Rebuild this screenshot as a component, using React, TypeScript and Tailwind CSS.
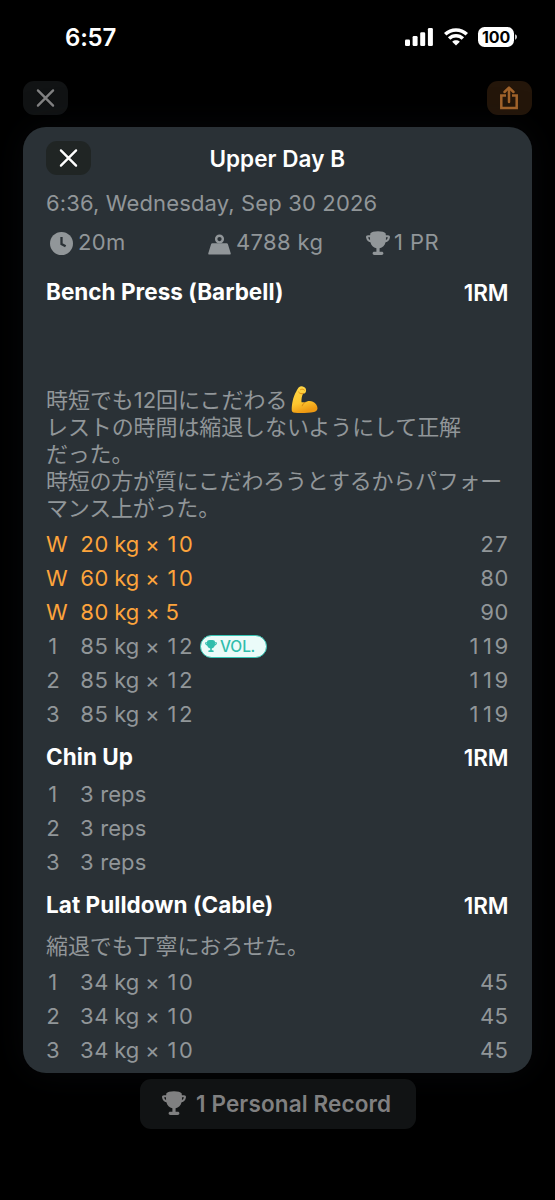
import type { ReactNode } from "react";

type SetRow = { tag: string; text: string; rm?: string; pr?: boolean };

const bench: SetRow[] = [
  { tag: "W", text: "20 kg × 10", rm: "27" },
  { tag: "W", text: "60 kg × 10", rm: "80" },
  { tag: "W", text: "80 kg × 5", rm: "90" },
  { tag: "1", text: "85 kg × 12", rm: "119", pr: true },
  { tag: "2", text: "85 kg × 12", rm: "119" },
  { tag: "3", text: "85 kg × 12", rm: "119" },
];
const chin: SetRow[] = [
  { tag: "1", text: "3 reps" },
  { tag: "2", text: "3 reps" },
  { tag: "3", text: "3 reps" },
];
const lat: SetRow[] = [
  { tag: "1", text: "34 kg × 10", rm: "45" },
  { tag: "2", text: "34 kg × 10", rm: "45" },
  { tag: "3", text: "34 kg × 10", rm: "45" },
];

function Trophy({ className }: { className: string }) {
  return (
    <svg viewBox="0 0 24 24" className={className} fill="currentColor">
      <path d="M4.400 2.200C5.500 1 8 .2 12 .2s6.500.8 7.600 2c.5 3 .6 6.500 0 9-.8 3.300-3 5.200-6 6v3.500h2c1.200 0 1.800.5 1.800 1.600S16.800 24 15.600 24H8.400C7.200 24 6.600 23.400 6.600 22.300s.6-1.600 1.800-1.600h2v-3.500c-3-.8-5.200-2.700-6-6-.6-2.500-.5-6 0-9Z" />
      <path d="M5 5.300H2c-.7 0-1 .3-.9 1C1.500 8.700 3 10.100 5.400 10.300M19 5.300h3c.7 0 1 .3.9 1-.4 2.400-1.900 3.800-4.300 4" fill="none" stroke="currentColor" strokeWidth="2.100" />
    </svg>
  );
}

function Cross({ className }: { className: string }) {
  return (
    <svg viewBox="0 0 18 18" className={className} fill="none" stroke="currentColor" strokeWidth="2.400" strokeLinecap="round">
      <path d="M1.400 1.400 16.600 16.600M16.600 1.400 1.400 16.600" />
    </svg>
  );
}

function Biceps() {
  return (
    <svg viewBox="0 0 28 30" className="ml-1 h-[30px] w-7 shrink-0 -translate-y-px">
      <defs>
        <linearGradient id="skin" x1="0" y1="0" x2="0.3" y2="1">
          <stop offset="0" stopColor="#ffd84a" />
          <stop offset="0.65" stopColor="#fdc62f" />
          <stop offset="1" stopColor="#ee9a13" />
        </linearGradient>
      </defs>
      <path
        d="M8.300 1.900C9.700.9 11.800 1.300 13.400 2.300c1.600 1 2 2.700 1.500 4.400-.4 1.400-1.500 2-2.800 1.900-1.300 2.700-1.800 5.600-1.600 8.700.9 0 2.100.1 3.200.3 2.300-1.900 5.700-2.200 8.200-.9 3 1.500 4.800 4.300 4.600 6.900-.2 2-1.500 3.100-3.500 3.400-5.500 1-13.500 1.400-19 .8C1.400 27.500.6 26.600.7 24.200.9 19.400 1.700 12.400 5.400 6.300c.8-1.700 1.500-3.500 2.900-4.400Z"
        fill="url(#skin)"
      />
      <path d="M7.700 7.200c1.200 1.500 2.900 1.900 4.400 1.400M9.600 4.600c1.300-.7 2.700-.5 3.700.4M14 17.500c-1.400.8-2.400 1.800-2.800 3.300" fill="none" stroke="#d98a12" strokeWidth="1" strokeLinecap="round" />
    </svg>
  );
}

function Heading({ children, className }: { children: ReactNode; className: string }) {
  return (
    <div className="flex h-[34px] items-center justify-between text-[22.5px] font-[650] text-white">
      <h2 className={`-translate-y-px ${className}`}>{children}</h2>
      <span className="font-semibold tracking-[-0.1px]">1RM</span>
    </div>
  );
}

/* Keeps the plain "1" glyph while giving it the width of the other digits. */
function Figures({ text }: { text: string }) {
  return text.split(/(1)/).map((part, i) =>
    part === "1" ? (
      <span key={i} className="inline-block w-[13.5px] text-center proportional-nums">1</span>
    ) : (
      part
    ),
  );
}

function Sets({ rows }: { rows: SetRow[] }) {
  return (
    <ul className="tabular-nums [font-feature-settings:'calt'_0]">
      {rows.map((r, i) => (
        <li key={i} className={r.tag === "W" ? "flex h-[34px] items-center text-[#fda43c]" : "flex h-[34px] items-center"}>
          <span className="w-[34px]"><Figures text={r.tag} /></span>
          <span className={r.rm ? "tracking-[-0.04px] whitespace-pre" : "tracking-[0.05px]"}><Figures text={r.text} /></span>
          {r.pr && (
            <span className="ml-[7px] flex h-[23px] w-[67px] items-center rounded-full border-[1.5px] border-[#36c6b5] bg-[#ebfbf9] pl-1 text-[15.5px] font-medium text-[#30bdac]">
              <Trophy className="mr-[3px] size-3" />
              <span className="tracking-[-0.1px]">VOL.</span>
            </span>
          )}
          {r.rm && <span className="ml-auto text-[#919699]"><Figures text={r.rm} /></span>}
        </li>
      ))}
    </ul>
  );
}

const jp = "font-['Inter','Noto_Sans_CJK_JP',sans-serif] whitespace-nowrap";

export default function App() {
  return (
    <div className="flex h-[1200px] w-[555px] flex-col overflow-hidden bg-black font-['Inter',sans-serif] text-[22px] leading-[27px] font-[430] text-[#919699]">
      <header className="flex h-[81px] shrink-0 items-start justify-between pt-[21px] pr-[38px] pl-[65px] text-white">
        <span className="flex h-8 items-center text-[24px] font-semibold tracking-[-0.2px]">6:57</span>
        <div className="flex h-8 items-center">
          <svg viewBox="0 0 28 18" className="h-[18px] w-7" fill="currentColor">
            <rect x="0" y="11.500" width="5" height="6.500" rx="1.300" />
            <rect x="7.600" y="8" width="5" height="10" rx="1.300" />
            <rect x="15.200" y="4.300" width="5" height="13.700" rx="1.300" />
            <rect x="22.900" y="0" width="5" height="18" rx="1.300" />
          </svg>
          <svg viewBox="0 0 24 18" className="ml-[11px] h-[18px] w-6" fill="none" stroke="currentColor" strokeWidth="3.500">
            <path d="M1.200 6.300C7.200.4 16.800.4 22.800 6.300M5.100 10.500c3.900-3.800 9.900-3.800 13.800 0" />
            <path d="m12 17.600-3.800-3.900c2.100-1.800 5.500-1.800 7.600 0Z" fill="currentColor" stroke="none" />
          </svg>
          <span className="ml-[10px] flex h-5 w-9 items-center justify-center rounded-[6.500px] bg-white text-[16px] font-bold tracking-[-0.1px] text-black">100</span>
          <svg viewBox="0 0 3 8" className="ml-px h-2 w-[2px]" fill="#c8c8c8">
            <path d="M0 0c4 1.500 4 6.500 0 8Z" />
          </svg>
        </div>
      </header>

      <div className="flex h-[46px] shrink-0 items-start justify-between px-[23px]">
        <button className="flex h-[34px] w-[45px] items-center justify-center rounded-[11px] bg-[#111314] text-[#808081]">
          <Cross className="size-[18px] -translate-x-[0.5px]" />
        </button>
        <button className="flex h-[34px] w-[45px] items-center justify-center rounded-[11px] bg-[#24160a] text-[#a0622a]">
          <svg viewBox="0 0 18 24" className="h-6 w-[18px] -translate-x-px" fill="none" stroke="currentColor" strokeWidth="2.500">
            <path d="M6 9.600H1.300v12.500h15.400V9.600H12" />
            <path d="M9 16V2.500" strokeLinecap="round" />
            <path d="M4.500 6 9 1.600 13.500 6" strokeLinecap="round" strokeLinejoin="round" />
          </svg>
        </button>
      </div>

      <main className="mx-[23px] h-[946px] w-[508.5px] shrink-0 rounded-[23px] bg-[#2a3136] px-[23px] pt-[14px] shadow-[0_0_36px_rgba(20,22,30,0.35)]">
        <div className="grid h-[34px] grid-cols-[45px_1fr_45px] items-center">
          <button className="flex h-[34px] w-[45px] items-center justify-center rounded-[11px] bg-[#202524] text-white">
            <Cross className="size-[18px] -translate-x-[0.5px]" />
          </button>
          <h1 className="text-center text-[22.5px] font-semibold tracking-[0.05px] text-white">Upper Day B</h1>
        </div>
        <p className="mt-[11px] flex h-[34px] items-center tracking-[0.14px] whitespace-nowrap">6:36, Wednesday, Sep 30 2026</p>
        <div className="mt-[6px] grid h-[34px] grid-cols-[158px_158px_1fr] items-center pl-1">
          <div className="flex items-center gap-[5px]">
            <svg viewBox="0 0 24 24" className="size-[23px]">
              <circle cx="12" cy="12" r="12" fill="currentColor" />
              <path d="M12 5.200v7.300l4.300 2.400" fill="none" stroke="#2a3136" strokeWidth="2.400" />
            </svg>
            <span className="-translate-y-px tracking-[0.3px]">20m</span>
          </div>
          <div className="flex items-center gap-[5px]">
            <svg viewBox="0 0 24 21" className="h-[21px] w-[23px] translate-y-px" fill="currentColor">
              <path d="M4.600 9.200h14.800c.8 0 1.200.3 1.400 1L23.700 19.600c.2.800-.2 1.400-1 1.400H1.300c-.8 0-1.200-.6-1-1.400L3.200 10.200c.2-.7.6-1 1.400-1Z" />
              <circle cx="12" cy="4.800" r="3.500" fill="none" stroke="currentColor" strokeWidth="2.500" />
            </svg>
            <span className="-translate-y-px tracking-[0.35px]">4788 kg</span>
          </div>
          <div className="flex items-center gap-1">
            <Trophy className="size-6" />
            <span className="-translate-y-px tracking-[0.4px]">1 PR</span>
          </div>
        </div>

        <section className="mt-[15px]">
          <Heading className="tracking-[0.02px]">Bench Press (Barbell)</Heading>
          <div className={`mt-[77px] mb-[5px] leading-[27.2px] ${jp}`}>
            <p className="flex h-[27.2px] translate-y-px items-center tracking-[-0.05px]">時短でも12回にこだわる<Biceps /></p>
            <p className="translate-y-px tracking-[-0.1px]">レストの時間は縮退しないようにして正解</p>
            <p className="translate-y-px tracking-[-0.2px]">だった。</p>
            <p className="tracking-[-0.23px]">時短の方が質にこだわろうとするからパフォー</p>
            <p className="tracking-[-0.2px]">マンス上がった。</p>
          </div>
          <Sets rows={bench} />
        </section>

        <section className="mt-[9px]">
          <Heading className="tracking-[0.05px]">Chin Up</Heading>
          <div className="mt-[3px]">
            <Sets rows={chin} />
          </div>
        </section>

        <section className="mt-[9px]">
          <Heading className="tracking-[0.05px]">Lat Pulldown (Cable)</Heading>
          <p className={`mt-[10px] mb-[6px] translate-y-px leading-[27px] tracking-[-0.1px] ${jp}`}>縮退でも丁寧におろせた。</p>
          <Sets rows={lat} />
        </section>
      </main>

      <div className="flex h-[127px] shrink-0 justify-center pt-[6px]">
        <button className="relative flex h-[50px] w-[276px] items-center rounded-[11px] bg-[#111314] pl-[22px] text-[22.5px] font-semibold text-[#808081]">
          <Trophy className="mr-[10.5px] size-6 -translate-y-px" />
          <span className="-translate-y-px tracking-[0.13px] whitespace-nowrap">1 Personal Record</span>
        </button>
      </div>
    </div>
  );
}
